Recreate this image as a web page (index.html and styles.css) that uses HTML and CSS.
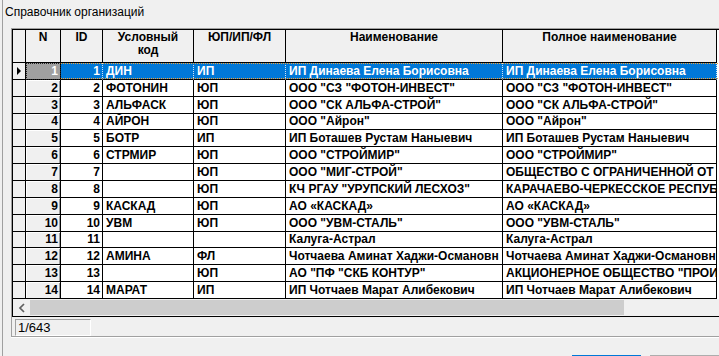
FILE: index.html
```html
<!DOCTYPE html>
<html lang="ru">
<head>
    <meta charset="UTF-8">
    <title>Справочник организаций</title>
    <link rel="stylesheet" href="styles.css">
</head>
<body>

    <div class="window">
        <div class="caption">Справочник организаций</div>

        <div class="frame">
            <div class="gridbox">
                <!-- Заголовок таблицы -->
                <div class="row head">
                    <div class="cell c-ind"></div>
                    <div class="cell c-n">N</div>
                    <div class="cell c-id">ID</div>
                    <div class="cell c-code">Условный<br>код</div>
                    <div class="cell c-type">ЮП/ИП/ФЛ</div>
                    <div class="cell c-name">Наименование</div>
                    <div class="cell c-full">Полное наименование</div>
                </div>

                <div class="rows">
                    <div class="row sel">
                        <div class="cell c-ind"><span class="pointer"></span></div>
                        <div class="cell c-n num">1</div>
                        <div class="cell c-id num">1</div>
                        <div class="cell c-code">ДИН</div>
                        <div class="cell c-type">ИП</div>
                        <div class="cell c-name">ИП Динаева Елена Борисовна</div>
                        <div class="cell c-full">ИП Динаева Елена Борисовна</div>
                    </div>
                    <div class="row">
                        <div class="cell c-ind"></div>
                        <div class="cell c-n num">2</div>
                        <div class="cell c-id num">2</div>
                        <div class="cell c-code">ФОТОНИН</div>
                        <div class="cell c-type">ЮП</div>
                        <div class="cell c-name">ООО "СЗ "ФОТОН-ИНВЕСТ"</div>
                        <div class="cell c-full">ООО "СЗ "ФОТОН-ИНВЕСТ"</div>
                    </div>
                    <div class="row">
                        <div class="cell c-ind"></div>
                        <div class="cell c-n num">3</div>
                        <div class="cell c-id num">3</div>
                        <div class="cell c-code">АЛЬФАСК</div>
                        <div class="cell c-type">ЮП</div>
                        <div class="cell c-name">ООО "СК АЛЬФА-СТРОЙ"</div>
                        <div class="cell c-full">ООО "СК АЛЬФА-СТРОЙ"</div>
                    </div>
                    <div class="row">
                        <div class="cell c-ind"></div>
                        <div class="cell c-n num">4</div>
                        <div class="cell c-id num">4</div>
                        <div class="cell c-code">АЙРОН</div>
                        <div class="cell c-type">ЮП</div>
                        <div class="cell c-name">ООО "Айрон"</div>
                        <div class="cell c-full">ООО "Айрон"</div>
                    </div>
                    <div class="row">
                        <div class="cell c-ind"></div>
                        <div class="cell c-n num">5</div>
                        <div class="cell c-id num">5</div>
                        <div class="cell c-code">БОТР</div>
                        <div class="cell c-type">ИП</div>
                        <div class="cell c-name">ИП Боташев Рустам Наныевич</div>
                        <div class="cell c-full">ИП Боташев Рустам Наныевич</div>
                    </div>
                    <div class="row">
                        <div class="cell c-ind"></div>
                        <div class="cell c-n num">6</div>
                        <div class="cell c-id num">6</div>
                        <div class="cell c-code">СТРМИР</div>
                        <div class="cell c-type">ЮП</div>
                        <div class="cell c-name">ООО "СТРОЙМИР"</div>
                        <div class="cell c-full">ООО "СТРОЙМИР"</div>
                    </div>
                    <div class="row">
                        <div class="cell c-ind"></div>
                        <div class="cell c-n num">7</div>
                        <div class="cell c-id num">7</div>
                        <div class="cell c-code"></div>
                        <div class="cell c-type">ЮП</div>
                        <div class="cell c-name">ООО "МИГ-СТРОЙ"</div>
                        <div class="cell c-full">ОБЩЕСТВО С ОГРАНИЧЕННОЙ ОТ</div>
                    </div>
                    <div class="row">
                        <div class="cell c-ind"></div>
                        <div class="cell c-n num">8</div>
                        <div class="cell c-id num">8</div>
                        <div class="cell c-code"></div>
                        <div class="cell c-type">ЮП</div>
                        <div class="cell c-name">КЧ РГАУ "УРУПСКИЙ ЛЕСХОЗ"</div>
                        <div class="cell c-full">КАРАЧАЕВО-ЧЕРКЕССКОЕ РЕСПУБ</div>
                    </div>
                    <div class="row">
                        <div class="cell c-ind"></div>
                        <div class="cell c-n num">9</div>
                        <div class="cell c-id num">9</div>
                        <div class="cell c-code">КАСКАД</div>
                        <div class="cell c-type">ЮП</div>
                        <div class="cell c-name">АО «КАСКАД»</div>
                        <div class="cell c-full">АО «КАСКАД»</div>
                    </div>
                    <div class="row">
                        <div class="cell c-ind"></div>
                        <div class="cell c-n num">10</div>
                        <div class="cell c-id num">10</div>
                        <div class="cell c-code">УВМ</div>
                        <div class="cell c-type">ЮП</div>
                        <div class="cell c-name">ООО "УВМ-СТАЛЬ"</div>
                        <div class="cell c-full">ООО "УВМ-СТАЛЬ"</div>
                    </div>
                    <div class="row">
                        <div class="cell c-ind"></div>
                        <div class="cell c-n num">11</div>
                        <div class="cell c-id num">11</div>
                        <div class="cell c-code"></div>
                        <div class="cell c-type"></div>
                        <div class="cell c-name">Калуга-Астрал</div>
                        <div class="cell c-full">Калуга-Астрал</div>
                    </div>
                    <div class="row">
                        <div class="cell c-ind"></div>
                        <div class="cell c-n num">12</div>
                        <div class="cell c-id num">12</div>
                        <div class="cell c-code">АМИНА</div>
                        <div class="cell c-type">ФЛ</div>
                        <div class="cell c-name">Чотчаева Аминат Хаджи-Османовн</div>
                        <div class="cell c-full">Чотчаева Аминат Хаджи-Османовн</div>
                    </div>
                    <div class="row">
                        <div class="cell c-ind"></div>
                        <div class="cell c-n num">13</div>
                        <div class="cell c-id num">13</div>
                        <div class="cell c-code"></div>
                        <div class="cell c-type">ЮП</div>
                        <div class="cell c-name">АО "ПФ "СКБ КОНТУР"</div>
                        <div class="cell c-full">АКЦИОНЕРНОЕ ОБЩЕСТВО "ПРОИ</div>
                    </div>
                    <div class="row">
                        <div class="cell c-ind"></div>
                        <div class="cell c-n num">14</div>
                        <div class="cell c-id num">14</div>
                        <div class="cell c-code">МАРАТ</div>
                        <div class="cell c-type">ИП</div>
                        <div class="cell c-name">ИП Чотчаев Марат Алибекович</div>
                        <div class="cell c-full">ИП Чотчаев Марат Алибекович</div>
                    </div>
                </div>

                <!-- Горизонтальная прокрутка -->
                <div class="hscroll">
                    <div class="arrow">
                        <svg width="8" height="10" viewBox="0 0 8 10">
                            <path d="M6 1 L2 5 L6 9" fill="none" stroke="#606060" stroke-width="1.7"/>
                        </svg>
                    </div>
                    <div class="thumb"></div>
                </div>
            </div>

            <div class="status">
                <div class="panel">1/643</div>
            </div>
        </div>

        <div class="buttons">
            <div class="btn btn-default"></div>
            <div class="btn"></div>
        </div>
    </div>

</body>
</html>
```

FILE: styles.css
```css
body {
    margin: 0;
    width: 719px;
    height: 356px;
    overflow: hidden;
    background-color: #f0f0f0;
    font-family: "Liberation Sans", Arial, sans-serif;
    color: #000000;
}

.window {
    margin-left: 2px;
    height: 356px;
    border-left: 1px solid #a0a0a0;
    box-sizing: border-box;
}

.caption {
    height: 28px;
    box-sizing: border-box;
    padding: 4px 0 0 2px;
    font-size: 12px;
    line-height: 16px;
}

.frame {
    margin-left: 8px;
    width: 716px;
    border-top: 1px solid #a0a0a0;
    border-left: 1px solid #a0a0a0;
    border-bottom: 1px solid #a0a0a0;
    box-shadow: 0 1px 0 #ffffff;
}

.gridbox {
    border-top: 1px solid #000000;
    border-left: 1px solid #000000;
    border-bottom: 1px solid #000000;
    background-color: #ffffff;
}

.row {
    display: flex;
    position: relative;
}

.cell {
    box-sizing: border-box;
    flex: none;
    border-right: 1px solid #000000;
    border-bottom: 1px solid #000000;
    padding: 0 2px 0 3px;
    font-size: 12px;
    font-weight: bold;
    white-space: nowrap;
    overflow: hidden;
    display: flex;
    align-items: center;
}

.c-ind  { width: 13px; padding: 0; background-color: #f0f0f0; }
.c-n    { width: 35px; background-color: #f0f0f0; box-shadow: inset 1px 1px 0 #ffffff, inset -1px 0 0 #a0a0a0; }
.c-id   { width: 42px; }
.c-code { width: 91px; }
.c-type { width: 92px; }
.c-name { width: 217px; }
.c-full { width: 214px; }

.num {
    justify-content: flex-end;
    padding: 0 2px 0 0;
}

/* Заголовок */
.head {
    height: 33px;
}

.head .cell {
    background-color: #f0f0f0;
    box-shadow: none;
    justify-content: center;
    align-items: flex-start;
    text-align: center;
    line-height: 13px;
    padding: 1px 0 0;
}

.rows {
    height: 236px;
    display: grid;
    grid-template-rows: repeat(14, 1fr);
}

.rows .row {
    min-height: 0;
}

/* Выделенная строка */
.sel .cell {
    background-color: #0078d7;
    color: #ffffff;
    border-right: 1px dotted #cfe3f7;
}

.sel .c-ind {
    background-color: #f0f0f0;
    border-right: 1px solid #000000;
}

.sel .c-n {
    background-color: #a0a0a0;
    border-right: 1px solid #000000;
    box-shadow: none;
    outline: 1px dotted #202020;
    outline-offset: -1px;
}

.sel::after {
    content: "";
    position: absolute;
    left: 48px;
    right: 0;
    top: 0;
    bottom: 1px;
    border-top: 1px dotted #f2a33a;
    border-bottom: 1px dotted #f2a33a;
    pointer-events: none;
}

.pointer {
    width: 0;
    height: 0;
    margin-left: 4px;
    border-left: 4px solid #000000;
    border-top: 4px solid transparent;
    border-bottom: 4px solid transparent;
}

/* Прокрутка */
.hscroll {
    height: 17px;
    display: flex;
    background-color: #f0f0f0;
    padding-top: 1px;
    box-sizing: border-box;
}

.arrow {
    width: 17px;
    height: 15px;
    display: flex;
    align-items: center;
    justify-content: center;
}

.thumb {
    width: 594px;
    height: 15px;
    background-color: #cdcdcd;
}

/* Строка состояния */
.status {
    height: 19px;
    padding: 2px 0 0 3px;
    box-sizing: border-box;
}

.panel {
    width: 76px;
    height: 17px;
    box-sizing: border-box;
    border-top: 1px solid #a0a0a0;
    border-left: 1px solid #a0a0a0;
    border-bottom: 1px solid #ffffff;
    border-right: 1px solid #ffffff;
    padding-left: 2px;
    font-size: 13px;
    line-height: 15px;
}

/* Верх кнопок, уходящих за нижний край */
.buttons {
    display: flex;
    gap: 9px;
    margin-top: 18px;
    padding-left: 569px;
}

.btn {
    width: 82px;
    height: 1px;
    box-sizing: border-box;
    border-top: 1px solid #adadad;
}

.btn-default {
    border-top-color: #0078d7;
}
```
